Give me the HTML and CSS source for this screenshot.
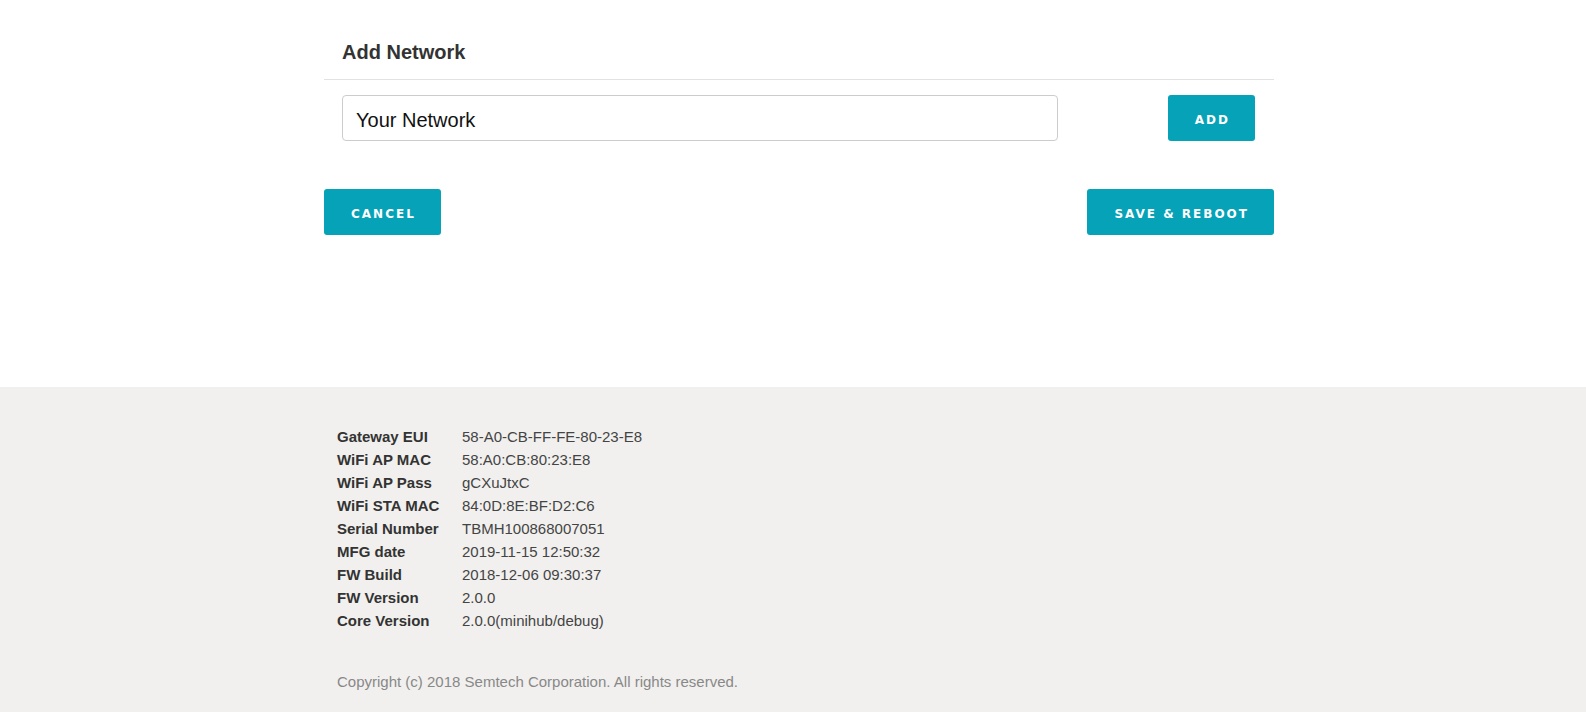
FILE: index.html
```html
<!DOCTYPE html>
<html lang="en">
<head>
<meta charset="utf-8">
<title>Add Network</title>
<link rel="stylesheet" href="styles.css">
</head>
<body>
<main class="main">
  <div class="container">
    <h2 class="section-title">Add Network</h2>
    <div class="add-row">
      <input class="net-input" type="text" value="Your Network">
      <button class="btn">ADD</button>
    </div>
    <div class="actions">
      <button class="btn">CANCEL</button>
      <button class="btn">SAVE &amp; REBOOT</button>
    </div>
  </div>
</main>
<footer class="footer">
  <div class="container footer-inner">
    <table class="info">
      <tr><th>Gateway EUI</th><td>58-A0-CB-FF-FE-80-23-E8</td></tr>
      <tr><th>WiFi AP MAC</th><td>58:A0:CB:80:23:E8</td></tr>
      <tr><th>WiFi AP Pass</th><td>gCXuJtxC</td></tr>
      <tr><th>WiFi STA MAC</th><td>84:0D:8E:BF:D2:C6</td></tr>
      <tr><th>Serial Number</th><td>TBMH100868007051</td></tr>
      <tr><th>MFG date</th><td>2019-11-15 12:50:32</td></tr>
      <tr><th>FW Build</th><td>2018-12-06 09:30:37</td></tr>
      <tr><th>FW Version</th><td>2.0.0</td></tr>
      <tr><th>Core Version</th><td>2.0.0(minihub/debug)</td></tr>
    </table>
    <p class="copyright">Copyright (c) 2018 Semtech Corporation. All rights reserved.</p>
  </div>
</footer>
</body>
</html>
```

FILE: styles.css
```css
html, body {
  margin: 0;
  padding: 0;
  background: #ffffff;
  font-family: "Liberation Sans", Arial, sans-serif;
}

.main {
  height: 387px;
  box-sizing: border-box;
}

.container {
  width: 950px;
  margin-left: calc(50% - 469px);
  box-sizing: border-box;
}

.section-title {
  margin: 0;
  padding: 40px 18px 15px;
  font-size: 20px;
  line-height: 24px;
  font-weight: bold;
  color: #333333;
  border-bottom: 1px solid #e2e2e2;
}

.add-row {
  margin-top: 15px;
  padding: 0 19px 0 18px;
  display: flex;
  justify-content: space-between;
  align-items: flex-start;
}

.net-input {
  width: 716px;
  height: 46px;
  box-sizing: border-box;
  border: 1px solid #cccccc;
  border-radius: 4px;
  padding: 4px 13px 0;
  margin: 0;
  font-family: "Liberation Sans", Arial, sans-serif;
  font-size: 20px;
  color: #111111;
  background: #ffffff;
  outline: none;
}

.btn {
  height: 46px;
  box-sizing: border-box;
  margin: 0;
  padding: 4px 25px 0 27px;
  line-height: 42px;
  border: none;
  border-radius: 3px;
  background: #06a2b8;
  color: #ffffff;
  font-family: "DejaVu Sans", Verdana, sans-serif;
  font-size: 12px;
  font-weight: bold;
  letter-spacing: 2px;
  cursor: pointer;
}

.actions {
  margin-top: 48px;
  display: flex;
  justify-content: space-between;
}

.footer {
  background: #f1f0ee;
  min-height: 325px;
  box-sizing: border-box;
  padding-top: 38px;
}

.footer-inner {
  padding-left: 13px;
}

.info {
  border-collapse: collapse;
  font-size: 15px;
  line-height: 23px;
}

.info th {
  width: 125px;
  padding: 0;
  text-align: left;
  font-weight: bold;
  color: #333333;
}

.info td {
  padding: 0;
  color: #444444;
}

.copyright {
  margin: 38px 0 0;
  font-size: 15px;
  line-height: 23px;
  color: #888888;
}
```
